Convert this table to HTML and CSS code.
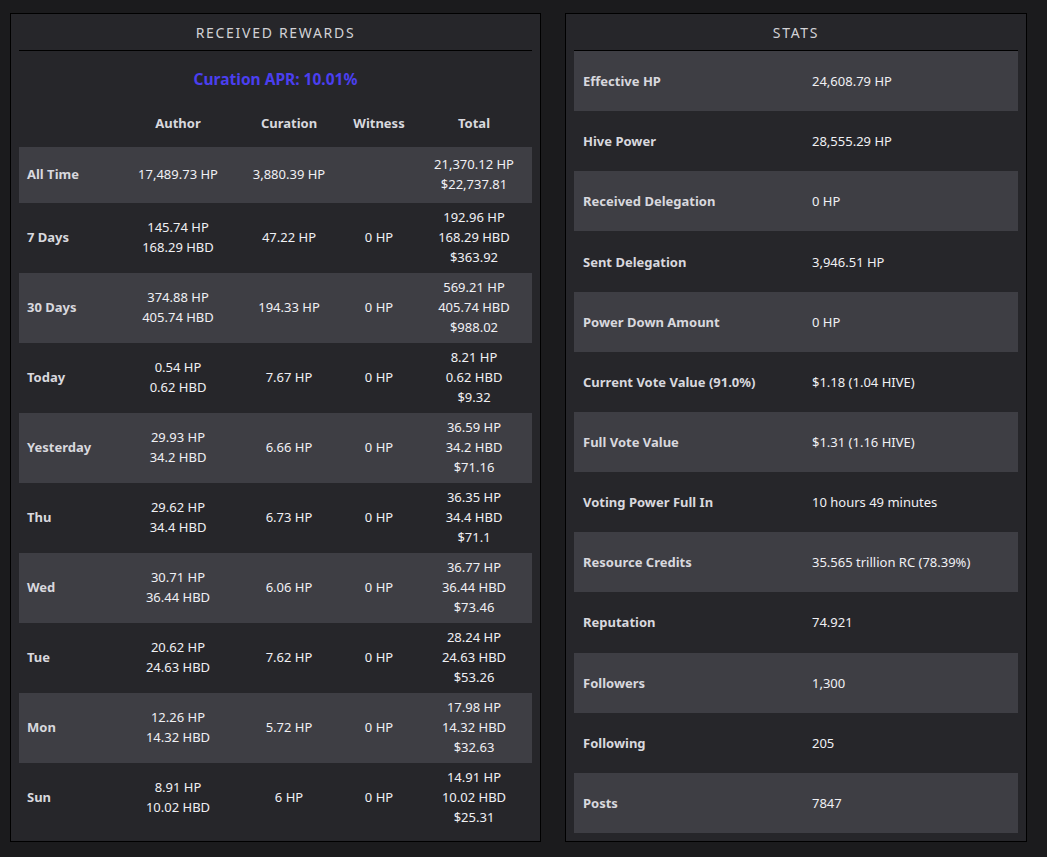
FILE: index.html
```html
<!DOCTYPE html>
<html>
<head>
<meta charset="utf-8">
<link rel="stylesheet" href="styles.css">
</head>
<body>
<div class="page">
  <section class="card rewards">
    <h2 class="card-title">Received Rewards</h2>
    <div class="apr">Curation APR: 10.01%</div>
    <div class="rtable">
      <div class="rrow head">
        <div></div><div>Author</div><div>Curation</div><div>Witness</div><div>Total</div>
      </div>
      <div class="rrow alt short">
        <div class="lbl">All Time</div><div>17,489.73 HP</div><div>3,880.39 HP</div><div></div><div>21,370.12 HP<br>$22,737.81</div>
      </div>
      <div class="rrow">
        <div class="lbl">7 Days</div><div>145.74 HP<br>168.29 HBD</div><div>47.22 HP</div><div>0 HP</div><div>192.96 HP<br>168.29 HBD<br>$363.92</div>
      </div>
      <div class="rrow alt">
        <div class="lbl">30 Days</div><div>374.88 HP<br>405.74 HBD</div><div>194.33 HP</div><div>0 HP</div><div>569.21 HP<br>405.74 HBD<br>$988.02</div>
      </div>
      <div class="rrow">
        <div class="lbl">Today</div><div>0.54 HP<br>0.62 HBD</div><div>7.67 HP</div><div>0 HP</div><div>8.21 HP<br>0.62 HBD<br>$9.32</div>
      </div>
      <div class="rrow alt">
        <div class="lbl">Yesterday</div><div>29.93 HP<br>34.2 HBD</div><div>6.66 HP</div><div>0 HP</div><div>36.59 HP<br>34.2 HBD<br>$71.16</div>
      </div>
      <div class="rrow">
        <div class="lbl">Thu</div><div>29.62 HP<br>34.4 HBD</div><div>6.73 HP</div><div>0 HP</div><div>36.35 HP<br>34.4 HBD<br>$71.1</div>
      </div>
      <div class="rrow alt">
        <div class="lbl">Wed</div><div>30.71 HP<br>36.44 HBD</div><div>6.06 HP</div><div>0 HP</div><div>36.77 HP<br>36.44 HBD<br>$73.46</div>
      </div>
      <div class="rrow">
        <div class="lbl">Tue</div><div>20.62 HP<br>24.63 HBD</div><div>7.62 HP</div><div>0 HP</div><div>28.24 HP<br>24.63 HBD<br>$53.26</div>
      </div>
      <div class="rrow alt">
        <div class="lbl">Mon</div><div>12.26 HP<br>14.32 HBD</div><div>5.72 HP</div><div>0 HP</div><div>17.98 HP<br>14.32 HBD<br>$32.63</div>
      </div>
      <div class="rrow">
        <div class="lbl">Sun</div><div>8.91 HP<br>10.02 HBD</div><div>6 HP</div><div>0 HP</div><div>14.91 HP<br>10.02 HBD<br>$25.31</div>
      </div>
    </div>
  </section>
  <section class="card stats">
    <h2 class="card-title">Stats</h2>
    <div class="stable">
      <div class="srow alt"><div class="lbl">Effective HP</div><div>24,608.79 HP</div></div>
      <div class="srow"><div class="lbl">Hive Power</div><div>28,555.29 HP</div></div>
      <div class="srow alt"><div class="lbl">Received Delegation</div><div>0 HP</div></div>
      <div class="srow"><div class="lbl">Sent Delegation</div><div>3,946.51 HP</div></div>
      <div class="srow alt"><div class="lbl">Power Down Amount</div><div>0 HP</div></div>
      <div class="srow"><div class="lbl">Current Vote Value (91.0%)</div><div>$1.18 (1.04 HIVE)</div></div>
      <div class="srow alt"><div class="lbl">Full Vote Value</div><div>$1.31 (1.16 HIVE)</div></div>
      <div class="srow"><div class="lbl">Voting Power Full In</div><div>10 hours 49 minutes</div></div>
      <div class="srow alt"><div class="lbl">Resource Credits</div><div>35.565 trillion RC (78.39%)</div></div>
      <div class="srow"><div class="lbl">Reputation</div><div>74.921</div></div>
      <div class="srow alt"><div class="lbl">Followers</div><div>1,300</div></div>
      <div class="srow"><div class="lbl">Following</div><div>205</div></div>
      <div class="srow alt"><div class="lbl">Posts</div><div>7847</div></div>
    </div>
  </section>
</div>
</body>
</html>
```

FILE: styles.css
```css
html, body {
  margin: 0;
  padding: 0;
  background: #1b1b1d;
}
body {
  font-family: "Noto Sans", "Open Sans", sans-serif;
  font-size: 13px;
  color: #f0f0f4;
}
.page {
  display: flex;
  align-items: stretch;
  gap: 24px;
  padding: 13px 20px 15px 10px;
  height: 857px;
  box-sizing: border-box;
}
.card {
  background: #26262a;
  border: 1px solid #000;
  padding: 0 8px 8px 8px;
  display: flex;
  flex-direction: column;
  box-sizing: border-box;
}
.rewards { width: 531px; }
.stats { width: 462px; }
.card-title {
  margin: 0;
  height: 36px;
  border-bottom: 1px solid #000;
  font-size: 14px;
  font-weight: 400;
  letter-spacing: 1.7px;
  text-transform: uppercase;
  text-align: center;
  line-height: 37px;
  color: #d2d2d6;
}
.apr {
  text-align: center;
  color: #4b3ff0;
  font-weight: 700;
  font-size: 15.5px;
  margin-top: 17px;
  line-height: 22px;
}
.rtable { margin-top: 23px; }
.rrow {
  display: grid;
  grid-template-columns: 101px 116px 106px 74px 1fr;
  align-items: center;
  height: 70px;
  padding-bottom: 2px;
  box-sizing: border-box;
  line-height: 20px;
  text-align: center;
}
.rrow.head {
  height: 20px;
  padding-bottom: 0;
  margin-bottom: 14px;
  font-weight: 700;
  color: #d8d8de;
}
.rrow.short { height: 56px; }
.alt { background: #3e3e44; }
.lbl {
  text-align: left;
  padding-left: 8px;
  font-weight: 700;
  color: #d8d8de;
}
.stable {
  flex: 1;
  display: grid;
  grid-auto-rows: 1fr;
}
.srow {
  display: grid;
  grid-template-columns: 238px 1fr;
  align-items: center;
}
.srow .lbl { padding-left: 9px; }
```
